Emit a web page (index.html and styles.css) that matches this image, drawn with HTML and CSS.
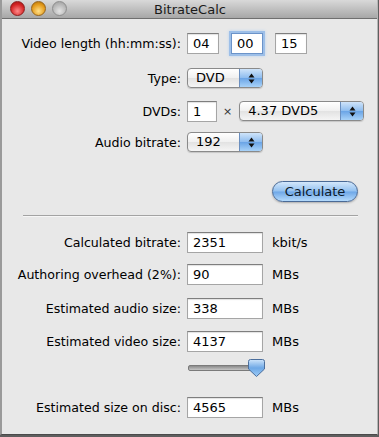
FILE: index.html
```html
<!DOCTYPE html>
<html lang="en">
<head>
    <meta charset="UTF-8">
    <meta name="viewport" content="width=device-width, initial-scale=1.0">
    <title>BitrateCalc</title>
    <link rel="stylesheet" href="styles.css">
</head>
<body>
    <div class="window">
        <div class="titlebar">
            <div class="lights">
                <span class="light light-close"></span>
                <span class="light light-min"></span>
                <span class="light light-zoom"></span>
            </div>
            <div class="title">BitrateCalc</div>
        </div>

        <div class="content">
            <!-- Input section -->
            <div class="row row-length">
                <label class="label">Video length (hh:mm:ss):</label>
                <input class="field field-time" type="text" value="04">
                <input class="field field-time focused" type="text" value="00">
                <input class="field field-time" type="text" value="15">
            </div>

            <div class="row row-type">
                <label class="label">Type:</label>
                <div class="popup popup-short">
                    <span class="popup-text">DVD</span>
                    <span class="popup-arrows"><svg width="7" height="11" viewBox="0 0 7 11"><path d="M3.5 0.5 L6.5 4.5 L0.5 4.5 Z M3.5 10.5 L6.5 6.5 L0.5 6.5 Z" fill="#111"/></svg></span>
                </div>
            </div>

            <div class="row row-dvds">
                <label class="label">DVDs:</label>
                <input class="field field-count" type="text" value="1">
                <span class="times">×</span>
                <div class="popup popup-long">
                    <span class="popup-text">4.37 DVD5</span>
                    <span class="popup-arrows"><svg width="7" height="11" viewBox="0 0 7 11"><path d="M3.5 0.5 L6.5 4.5 L0.5 4.5 Z M3.5 10.5 L6.5 6.5 L0.5 6.5 Z" fill="#111"/></svg></span>
                </div>
            </div>

            <div class="row row-audio">
                <label class="label">Audio bitrate:</label>
                <div class="popup popup-short">
                    <span class="popup-text">192</span>
                    <span class="popup-arrows"><svg width="7" height="11" viewBox="0 0 7 11"><path d="M3.5 0.5 L6.5 4.5 L0.5 4.5 Z M3.5 10.5 L6.5 6.5 L0.5 6.5 Z" fill="#111"/></svg></span>
                </div>
            </div>

            <div class="actions">
                <button class="calc-button" type="button">Calculate</button>
            </div>

            <div class="separator"></div>

            <!-- Results section -->
            <div class="row row-result first">
                <label class="label">Calculated bitrate:</label>
                <input class="field field-result" type="text" value="2351">
                <span class="unit">kbit/s</span>
            </div>

            <div class="row row-result overhead">
                <label class="label">Authoring overhead (2%):</label>
                <input class="field field-result" type="text" value="90">
                <span class="unit">MBs</span>
            </div>

            <div class="row row-result audio-size">
                <label class="label">Estimated audio size:</label>
                <input class="field field-result" type="text" value="338">
                <span class="unit">MBs</span>
            </div>

            <div class="row row-result video-size">
                <label class="label">Estimated video size:</label>
                <input class="field field-result" type="text" value="4137">
                <span class="unit">MBs</span>
            </div>

            <div class="slider">
                <div class="slider-track"></div>
                <svg class="slider-knob" width="17" height="18" viewBox="0 0 17 18">
                    <defs>
                        <linearGradient id="knobFill" x1="0" y1="0" x2="0" y2="1">
                            <stop offset="0" stop-color="#cfe5fb"/>
                            <stop offset="0.5" stop-color="#6ea8e6"/>
                            <stop offset="1" stop-color="#9ccbf6"/>
                        </linearGradient>
                    </defs>
                    <path d="M2.5 0.5 H14.5 Q16.5 0.5 16.5 2.5 V10 L8.5 17.5 L0.5 10 V2.5 Q0.5 0.5 2.5 0.5 Z" fill="url(#knobFill)" stroke="#4b6e9c"/>
                </svg>
            </div>

            <div class="row row-result disc-size">
                <label class="label">Estimated size on disc:</label>
                <input class="field field-result" type="text" value="4565">
                <span class="unit">MBs</span>
            </div>
        </div>
    </div>
</body>
</html>
```

FILE: styles.css
```css
/* Base */
body {
    margin: 0;
    padding: 0;
    background-color: #5e5e5e;
    font-family: "DejaVu Sans", Verdana, sans-serif;
    font-size: 12.6px;
    color: #000;
}

.window {
    width: 375px;
    height: 434px;
    background-color: #e8e8e8;
    border-left: 2px solid #9a9a9a;
    border-right: 1px solid #b5b5b5;
    border-bottom: 1px solid #4a4a4a;
}

/* Title bar */
.titlebar {
    position: relative;
    height: 18px;
    background: linear-gradient(#d9d9d9, #a7a7a7);
    border-bottom: 1px solid #6f6f6f;
    display: flex;
    align-items: center;
    justify-content: center;
}

.lights {
    position: absolute;
    left: 8px;
    top: 1px;
    display: flex;
    gap: 6px;
}

.light {
    width: 15px;
    height: 15px;
    border-radius: 50%;
    box-sizing: border-box;
}

.light-close {
    background: radial-gradient(circle at 50% 70%, #ff8a8a, #d42424 60%, #9c1010);
    border: 1px solid #8d1c1c;
}

.light-min {
    background: radial-gradient(circle at 50% 70%, #ffe08a, #e39a1a 60%, #a86a08);
    border: 1px solid #96641a;
}

.light-zoom {
    background: radial-gradient(circle at 50% 70%, #e4e4e4, #b7b7b7 60%, #9a9a9a);
    border: 1px solid #8e8e8e;
}

.title {
    font-size: 13px;
    color: #1a1a1a;
    padding-left: 1px;
}

/* Form rows */
.content {
    display: flex;
    flex-direction: column;
    padding-top: 13px;
}

.row {
    display: flex;
    align-items: center;
    height: 22px;
}

.label {
    width: 179px;
    text-align: right;
    margin-right: 6px;
    white-space: nowrap;
}

.row-type {
    margin-top: 13px;
}

.row-dvds {
    margin-top: 11px;
}

.row-audio {
    margin-top: 9px;
}

.field {
    box-sizing: border-box;
    height: 21px;
    padding: 1px 5px 0;
    border: 1px solid #a5a5a5;
    border-top-color: #7e7e7e;
    background-color: #fff;
    box-shadow: inset 0 1px 1px rgba(0, 0, 0, 0.12);
    font-family: inherit;
    font-size: 13px;
    color: #000;
    outline: none;
}

.field-time {
    width: 32px;
    margin-right: 12px;
}

.field-time.focused {
    border-color: #6b93c9;
    box-shadow: 0 0 0 2px #9dbfe8, 0 0 3px 2px #b9d3f1;
}

.field-count {
    width: 30px;
}

.times {
    margin: 0 7px 0 6px;
    font-size: 11px;
    color: #333;
}

/* Popup buttons */
.popup {
    box-sizing: border-box;
    display: flex;
    align-items: stretch;
    height: 20px;
    border: 1px solid #8a8a8a;
    border-radius: 4px;
    background: linear-gradient(#ffffff, #f0f0f0 50%, #e2e2e2 51%, #f5f5f5);
    box-shadow: 0 1px 1px rgba(0, 0, 0, 0.15);
    overflow: hidden;
}

.popup-short {
    width: 76px;
}

.popup-long {
    width: 125px;
}

.popup-text {
    flex: 1;
    padding-left: 8px;
    font-size: 13px;
    line-height: 18px;
}

.popup-arrows {
    width: 22px;
    display: flex;
    align-items: center;
    justify-content: center;
    border-left: 1px solid #6b8fbf;
    background: linear-gradient(#cfe4fa, #8dbcef 50%, #6aa4e6 51%, #a8d2f8);
}

/* Calculate button */
.actions {
    display: flex;
    justify-content: flex-end;
    margin-top: 28px;
    padding-right: 19px;
}

.calc-button {
    width: 86px;
    height: 21px;
    border: 1px solid #4a6a96;
    border-radius: 11px;
    background: linear-gradient(#d3e7fb, #93c1f0 48%, #6ea7e7 52%, #b4dafc);
    box-shadow: 0 1px 2px rgba(0, 0, 0, 0.25);
    font-family: inherit;
    font-size: 13px;
    color: #0d1a2a;
    padding: 0;
}

.separator {
    margin: 13px 19px 0 21px;
    height: 1px;
    background-color: #a3a3a3;
    border-bottom: 1px solid #f6f6f6;
}

/* Results */
.field-result {
    width: 76px;
}

.unit {
    margin-left: 9px;
    font-size: 13px;
}

.row-result.first {
    margin-top: 14px;
}

.row-result.overhead {
    margin-top: 10px;
}

.row-result.audio-size {
    margin-top: 12px;
}

.row-result.video-size {
    margin-top: 11px;
}

.row-result.disc-size {
    margin-top: 19px;
}

.slider {
    display: flex;
    align-items: center;
    height: 18px;
    margin-top: 7px;
    padding-left: 186px;
}

.slider-track {
    width: 62px;
    height: 4px;
    border-radius: 2px;
    background: linear-gradient(#8a8a8a, #c4c4c4);
    border: 1px solid #7a7a7a;
    margin-right: -4px;
}
```
